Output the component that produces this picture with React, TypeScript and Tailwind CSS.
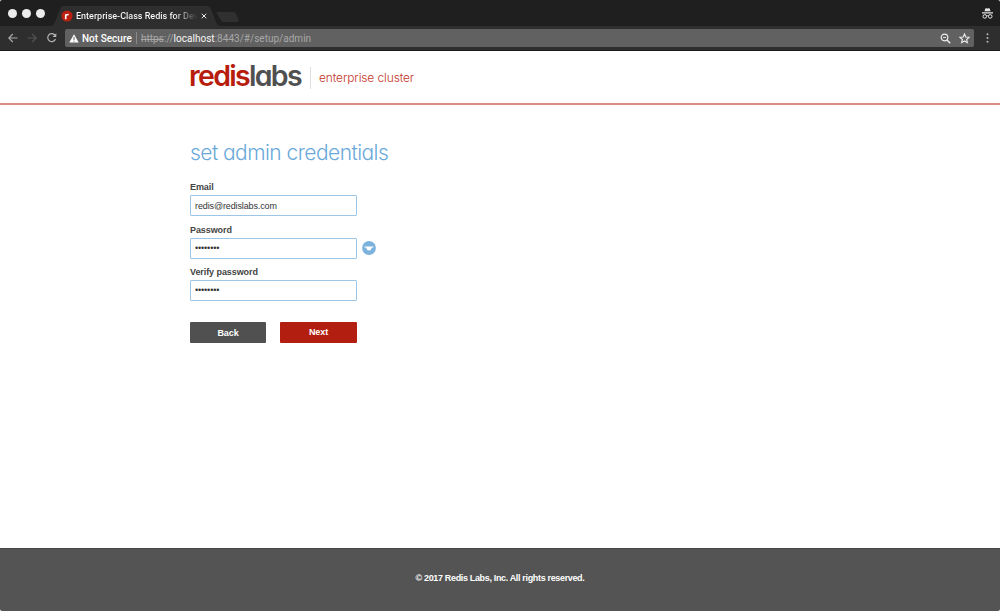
import type { ReactNode } from "react";

function TabStrip() {
  return (
    <div className="flex h-[26px] items-start bg-[#1f1f1f]">
      <div className="flex gap-[5px] pl-[8px] pt-[9px]">
        <span className="size-[9px] rounded-full bg-[#ececec]" />
        <span className="size-[9px] rounded-full bg-[#ececec]" />
        <span className="size-[9px] rounded-full bg-[#ececec]" />
      </div>
      <div className="relative ml-[5px] h-[26px] w-[196px]">
        <svg className="absolute inset-0" width="196" height="26" viewBox="0 0 196 26">
          <path d="M0 26C3 26 4 24 5 22L10 9Q11 6 14 6H157Q160 6 161 9L166 22Q167 25 170 26Z" fill="#2e2e2e" />
          <path d="M167 12H184Q185.500 12 186 13.500L188.500 20Q189 22 187 22H173Q171.500 22 171 20.500L167 13.500Q166 12 167 12Z" fill="#303030" />
        </svg>
        <div className="relative flex h-full items-center pl-[11px] pt-[6px]">
          <svg width="12" height="12" viewBox="0 0 12 12">
            <circle cx="6" cy="6" r="5.600" fill="#b9200f" />
            <path d="M4.700 9.300V4.200M4.700 6.800C4.700 4.800 5.900 4.400 7.700 4.500" fill="none" stroke="#fff" strokeWidth="1.600" />
          </svg>
          <div className="ml-[3px] w-[122px] overflow-hidden whitespace-nowrap bg-linear-to-r from-white from-80% to-[#2e2e2e] bg-clip-text text-[9px] font-medium leading-[12px] tracking-[0px] text-transparent">
            Enterprise-Class Redis for Dev
          </div>
          <svg className="ml-[3px]" width="6" height="6" viewBox="0 0 6 6">
            <path d="M.7.7l4.600 4.600M5.300.7L.7 5.300" stroke="#e8e8e8" strokeWidth="1" />
          </svg>
        </div>
      </div>
      <svg className="ml-auto mr-[7px] mt-[8px]" width="11" height="11" viewBox="0 0 11 11" fill="none">
        <path d="M2.500 3.300L3.200.7Q3.400 0 4.200.2L5.500.5 6.800.2Q7.600 0 7.800.7L8.500 3.300Z" fill="#e6e6e6" />
        <path d="M0 4.800H11" stroke="#e6e6e6" strokeWidth="1.200" />
        <circle cx="2.800" cy="8.400" r="1.800" stroke="#e6e6e6" strokeWidth="1" />
        <circle cx="8.200" cy="8.400" r="1.800" stroke="#e6e6e6" strokeWidth="1" />
        <path d="M4.600 8Q5.500 7.400 6.400 8" stroke="#e6e6e6" strokeWidth=".9" />
      </svg>
    </div>
  );
}

function Toolbar() {
  return (
    <div className="flex h-[25px] items-center border-b border-[#1b1b1b] bg-[#2e2e2e] pl-[8px]">
      <svg width="49" height="12" viewBox="0 0 49 12" fill="none">
        <path d="M9.500 6H.8M4.800 2L.8 6l4 4" stroke="#a9a9a9" strokeWidth="1.100" />
        <path d="M19.500 6h8.700M24.200 2l4 4-4 4" stroke="#555" strokeWidth="1.100" />
        <path d="M47 3.200A4 4 0 1 0 47.500 7" stroke="#b4b4b4" strokeWidth="1.200" />
        <path d="M48.300 1.200V5H44.500Z" fill="#b4b4b4" />
      </svg>
      <div className="ml-[8px] flex h-[18px] w-[909px] items-center rounded-[2px] bg-[#616161] pl-[4px] text-[10px] leading-[18px]">
        <svg width="10" height="9" viewBox="0 0 10 9">
          <path d="M5 .3L9.700 8.600H.3Z" fill="#fff" />
          <path d="M5 3v3M5 6.700v1" stroke="#616161" strokeWidth="1" />
        </svg>
        <span className="ml-[3px] w-[51px] whitespace-nowrap pt-[2px] font-medium tracking-[0.02px] text-white">Not Secure</span>
        <span className="ml-[3px] h-[12px] w-px bg-[#8a8a8a]" />
        <span className="ml-[4px] whitespace-nowrap pt-[2px] tracking-[0.02px] text-[#a8a8a8]">
          <span className="line-through">https</span>://<span className="text-[#f5f5f5]">localhost</span>:8443/#/setup/admin
        </span>
        <svg className="ml-auto" width="11" height="11" viewBox="0 0 11 11" fill="none" stroke="#ececec">
          <circle cx="4.500" cy="4.500" r="3.300" strokeWidth="1.200" />
          <path d="M7 7L10.200 10.200" strokeWidth="1.500" />
          <path d="M3 4.500h3" strokeWidth=".9" />
        </svg>
        <svg className="ml-[8px] mr-[4px]" width="11" height="11" viewBox="0 0 11 11">
          <path d="M5.500 1l1.300 3 3.300.3-2.500 2.200.8 3.200-2.900-1.700-2.900 1.700.8-3.200L.9 4.300 4.200 4Z" fill="none" stroke="#ececec" strokeWidth="1.100" />
        </svg>
      </div>
      <svg className="ml-[12px]" width="3" height="10" viewBox="0 0 3 10" fill="#b8b8b8">
        <circle cx="1.500" cy="1.300" r="1" />
        <circle cx="1.500" cy="5" r="1" />
        <circle cx="1.500" cy="8.700" r="1" />
      </svg>
    </div>
  );
}

function Field({ label, value, type = "text", children }: { label: string; value: string; type?: string; children?: ReactNode }) {
  return (
    <div className="h-[42.400px]">
      <label className="block h-[14px] text-[9px] font-bold leading-[12px] tracking-[-0.080px] text-[#444]">{label}</label>
      <div className="flex items-center">
        <input
          type={type}
          aria-label={label}
          defaultValue={value}
          className="h-[21px] w-[167px] rounded-[1px] border border-[#9cc6e8] bg-white px-[4px] text-[9px] tracking-[-0.120px] text-[#333] outline-none"
        />
        {children}
      </div>
    </div>
  );
}

export default function App() {
  return (
    <div className="flex h-[611px] w-[1000px] flex-col overflow-hidden rounded-[2px] bg-white font-['Liberation_Sans',Arial,sans-serif]">
      <div className="h-[51px] font-[Roboto,sans-serif]">
        <TabStrip />
        <Toolbar />
      </div>
      <header className="flex h-[54px] items-start border-b-2 border-[#da8b81] pl-[189px] font-[Inter,sans-serif] [font-feature-settings:'cv11']">
        <div className="mt-[9px] w-[113px] whitespace-nowrap text-[28.500px] font-semibold leading-[32px] tracking-[-1.700px] text-[#b71c0c]">
          redis<span className="text-[#505050]">labs</span>
        </div>
        <span className="ml-[8px] mt-[16px] h-[22px] w-px bg-[#dedede]" />
        <span className="ml-[8px] mt-[18.500px] whitespace-nowrap text-[12px] font-light leading-[16px] tracking-[-0.130px] text-[#c4362a]">enterprise cluster</span>
      </header>
      <main className="flex-1 pl-[190px] pt-[35.200px]">
        <h1 className="h-[41px] whitespace-nowrap font-[Inter,sans-serif] text-[21px] font-light leading-[26px] tracking-[-0.550px] text-[#6aa9d9] [font-feature-settings:'cv11']">
          set admin credentials
        </h1>
        <Field label="Email" value="redis@redislabs.com" />
        <Field label="Password" value="password" type="password">
          <svg className="ml-[5px]" width="14" height="14" viewBox="0 0 14 14">
            <circle cx="7" cy="7" r="6.900" fill="#7db2dd" />
            <path d="M2.500 5.500H11.500V6.500H10Q9.200 9.500 7 9.500T4 6.500H2.500Z" fill="#fff" />
          </svg>
        </Field>
        <Field label="Verify password" value="password" type="password" />
        <div className="mt-[14px] flex gap-[14px] text-[9px] font-bold tracking-[-0.080px] text-white">
          <button className="h-[21px] w-[76px] rounded-[1px] bg-[#505050] pt-[2px]">Back</button>
          <button className="h-[21px] w-[77px] rounded-[1px] bg-[#b21f10]">Next</button>
        </div>
      </main>
      <footer className="flex h-[63px] justify-center border-t border-[#454545] bg-[#545454] pt-[23px] text-[9px] font-bold leading-[12px] tracking-[-0.340px] text-white">
        © 2017 Redis Labs, Inc. All rights reserved.
      </footer>
    </div>
  );
}
